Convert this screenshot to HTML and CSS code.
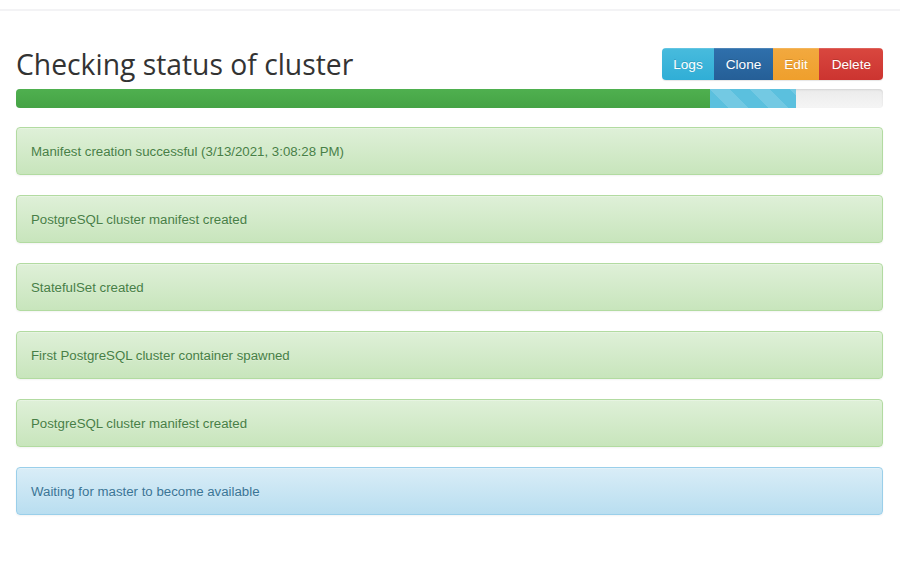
FILE: index.html
```html
<!DOCTYPE html>
<html>
<head>
<meta charset="utf-8">
<link rel="stylesheet" href="styles.css">
</head>
<body>
<div class="topbar"></div>
<div class="container">
  <div class="header">
    <h1 class="title">Checking status of cluster</h1>
    <div class="btn-group">
      <span class="btn btn-info">Logs</span>
      <span class="btn btn-primary">Clone</span>
      <span class="btn btn-warning">Edit</span>
      <span class="btn btn-danger">Delete</span>
    </div>
  </div>
  <div class="progress">
    <div class="bar bar-success" style="width: 80.05%"></div>
    <div class="bar bar-info" style="width: 9.92%"></div>
  </div>
  <div class="alert alert-success">Manifest creation successful (3/13/2021, 3:08:28 PM)</div>
  <div class="alert alert-success">PostgreSQL cluster manifest created</div>
  <div class="alert alert-success">StatefulSet created</div>
  <div class="alert alert-success">First PostgreSQL cluster container spawned</div>
  <div class="alert alert-success">PostgreSQL cluster manifest created</div>
  <div class="alert alert-info">Waiting for master to become available</div>
</div>
</body>
</html>
```
FILE: styles.css
```css
* { box-sizing: border-box; }
html, body { margin: 0; padding: 0; background: #fff; }
body {
  font-family: "Liberation Sans", Arial, sans-serif;
  font-size: 13.25px;
  line-height: 20px;
  color: #333;
}
.topbar {
  height: 11px;
  border-bottom: 2px solid #f3f3f5;
}
.container {
  padding: 37px 17px 0 16px;
}
.header {
  display: flex;
  justify-content: space-between;
  align-items: flex-start;
  height: 41px;
}
.title {
  margin: 0;
  font-family: "Open Sans", sans-serif;
  font-weight: 400;
  font-size: 28.3px;
  line-height: 32px;
  color: #333;
}
.btn-group {
  display: flex;
  border-radius: 4px;
  overflow: hidden;
  box-shadow: 0 1px 1px rgba(0,0,0,.1);
}
.btn {
  display: block;
  height: 32px;
  padding: 7px 11px 5px;
  color: #fff;
  font-size: 13.6px;
  line-height: 20px;
  text-shadow: 0 -1px 0 rgba(0,0,0,.15);
  box-shadow: inset 0 1px 0 rgba(255,255,255,.15);
}
.btn-primary { padding: 7px 12px 5px; }
.btn-danger { padding: 7px 12px 5px 13px; }
.btn-info { background: linear-gradient(#48bbdd, #30aed6); }
.btn-primary { background: linear-gradient(#2f70ac, #255f97); }
.btn-warning { background: linear-gradient(#f2a93f, #ef9f2c); }
.btn-danger { background: linear-gradient(#d9473f, #cc3430); }
.progress {
  display: flex;
  height: 19px;
  border-radius: 4px;
  overflow: hidden;
  background: linear-gradient(#ebebeb, #f5f5f5);
  box-shadow: inset 0 1px 2px rgba(0,0,0,.1);
  margin-bottom: 19px;
}
.bar { height: 100%; }
.bar-success { background: linear-gradient(#4fb04f, #45a345); }
.bar-info {
  background-color: #5bc0de;
  background-image: linear-gradient(45deg, rgba(255,255,255,.15) 25%, transparent 25%, transparent 50%, rgba(255,255,255,.15) 50%, rgba(255,255,255,.15) 75%, transparent 75%, transparent);
  background-size: 40px 40px;
}
.alert {
  height: 48px;
  padding: 14px 14px 12px;
  border: 1px solid transparent;
  border-radius: 4px;
  margin-bottom: 20px;
  text-shadow: 0 1px 0 rgba(255,255,255,.2);
  box-shadow: inset 0 1px 0 rgba(255,255,255,.25), 0 1px 2px rgba(0,0,0,.05);
}
.alert-success {
  color: #477f46;
  background: linear-gradient(#dff0d8, #c8e5bc);
  border-color: #b2dba1;
}
.alert-info {
  color: #3a7596;
  background: linear-gradient(#d9edf7, #b9def0);
  border-color: #9acfea;
}
```
